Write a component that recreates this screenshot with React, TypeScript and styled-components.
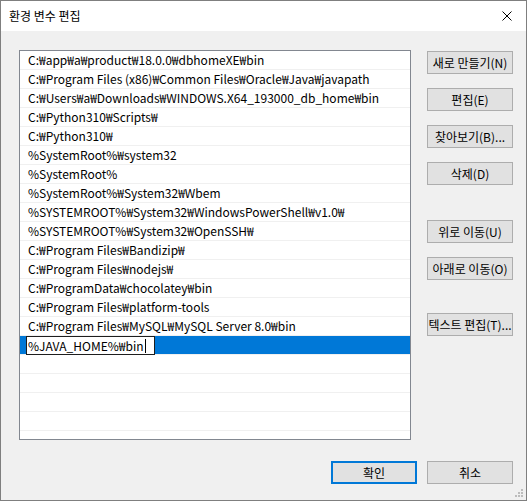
import React from "react";
import styled, { createGlobalStyle } from "styled-components";

const paths: string[] = [
  "C:₩app₩a₩product₩18.0.0₩dbhomeXE₩bin",
  "C:₩Program Files (x86)₩Common Files₩Oracle₩Java₩javapath",
  "C:₩Users₩a₩Downloads₩WINDOWS.X64_193000_db_home₩bin",
  "C:₩Python310₩Scripts₩",
  "C:₩Python310₩",
  "%SystemRoot%₩system32",
  "%SystemRoot%",
  "%SystemRoot%₩System32₩Wbem",
  "%SYSTEMROOT%₩System32₩WindowsPowerShell₩v1.0₩",
  "%SYSTEMROOT%₩System32₩OpenSSH₩",
  "C:₩Program Files₩Bandizip₩",
  "C:₩Program Files₩nodejs₩",
  "C:₩ProgramData₩chocolatey₩bin",
  "C:₩Program Files₩platform-tools",
  "C:₩Program Files₩MySQL₩MySQL Server 8.0₩bin",
];

const sideButtons = [
  { label: "새로 만들기(N)", mt: 1 },
  { label: "편집(E)", mt: 14 },
  { label: "찾아보기(B)...", mt: 14 },
  { label: "삭제(D)", mt: 14 },
  { label: "위로 이동(U)", mt: 35 },
  { label: "아래로 이동(O)", mt: 14 },
  { label: "텍스트 편집(T)...", mt: 33 },
];

const GlobalStyle = createGlobalStyle`
  html, body {
    margin: 0;
    padding: 0;
    background: #f0f0f0;
  }
  * {
    box-sizing: border-box;
  }
`;

const App: React.FC = () => {
  return (
    <>
      <GlobalStyle />
      <Window>
        <TitleBar>
          <Title>환경 변수 편집</Title>
          <CloseIcon width="10" height="10" viewBox="0 0 10 10">
            <path d="M0.5 0.5 L9.5 9.5 M9.5 0.5 L0.5 9.5" stroke="#000" strokeWidth="1" />
          </CloseIcon>
        </TitleBar>
        <Body>
          <Main>
            <PathList>
              {paths.map((p) => (
                <Row key={p}>{p}</Row>
              ))}
              <Row $selected>
                <EditBox>
                  %JAVA_HOME%₩bin<Caret />
                </EditBox>
              </Row>
              {Array.from({ length: 6 }).map((_, i) => (
                <Row key={"empty" + i} />
              ))}
            </PathList>
            <SideColumn>
              {sideButtons.map((b) => (
                <Button key={b.label} $mt={b.mt}>
                  {b.label}
                </Button>
              ))}
            </SideColumn>
          </Main>
          <Footer>
            <Button $default>확인</Button>
            <Button>취소</Button>
          </Footer>
          <Grip width="8" height="8" viewBox="0 0 8 8">
            <rect x="6" y="0" width="2" height="2" fill="#bcbcbc" />
            <rect x="3" y="3" width="2" height="2" fill="#bcbcbc" />
            <rect x="6" y="3" width="2" height="2" fill="#bcbcbc" />
            <rect x="0" y="6" width="2" height="2" fill="#bcbcbc" />
            <rect x="3" y="6" width="2" height="2" fill="#bcbcbc" />
            <rect x="6" y="6" width="2" height="2" fill="#bcbcbc" />
          </Grip>
        </Body>
      </Window>
    </>
  );
};

const Window = styled.div`
  width: 527px;
  height: 501px;
  border: 1px solid #7f7f7f;
  background: #f0f0f0;
  display: flex;
  flex-direction: column;
  font-family: "Noto Sans CJK KR", "Noto Sans", sans-serif;
  font-size: 12px;
  color: #000;
`;

const TitleBar = styled.div`
  height: 30px;
  background: #fff;
  display: flex;
  align-items: center;
  justify-content: space-between;
  padding: 0 14px 0 8px;
  flex-shrink: 0;
`;

const Title = styled.span`
  font-size: 12px;
  margin-top: -1px;
`;

const CloseIcon = styled.svg`
  display: block;
  margin-top: -1px;
`;

const Body = styled.div`
  position: relative;
  flex: 1;
  display: flex;
  flex-direction: column;
  padding: 19px 13px 0 18px;
`;

const Main = styled.div`
  display: flex;
  align-items: flex-start;
  gap: 16px;
`;

const PathList = styled.div`
  width: 392px;
  height: 390px;
  border: 1px solid #828790;
  background: #fff;
  overflow: hidden;
`;

const Row = styled.div<{ $selected?: boolean }>`
  height: 19px;
  border-bottom: 1px solid #f0f0f0;
  background: ${(p) => (p.$selected ? "#0078d7" : "#fff")};
  padding-left: 8px;
  display: flex;
  align-items: center;
  white-space: nowrap;
  line-height: 18px;
`;

const EditBox = styled.div`
  margin-left: -2px;
  width: 129px;
  height: 19px;
  margin-bottom: -1px;
  background: #fff;
  border: 1px solid #1e1e1e;
  padding-left: 1px;
  display: flex;
  align-items: center;
`;

const Caret = styled.span`
  display: inline-block;
  width: 1px;
  height: 14px;
  background: #000;
  margin-left: 1px;
`;

const SideColumn = styled.div`
  display: flex;
  flex-direction: column;
`;

const Button = styled.button<{ $mt?: number; $default?: boolean }>`
  width: 86px;
  height: 23px;
  margin: ${(p) => (p.$mt ?? 0)}px 0 0 0;
  padding: 0;
  font-family: inherit;
  font-size: 12px;
  color: #000;
  background: #e1e1e1;
  border: 1px solid ${(p) => (p.$default ? "#0078d7" : "#adadad")};
  box-shadow: ${(p) => (p.$default ? "inset 0 0 0 1px #0078d7" : "none")};
  white-space: nowrap;
  display: flex;
  align-items: center;
  justify-content: center;
`;

const Footer = styled.div`
  display: flex;
  justify-content: flex-end;
  gap: 10px;
  margin-top: 21px;
`;

const Grip = styled.svg`
  position: absolute;
  right: 3px;
  bottom: 3px;
`;

export default App;
